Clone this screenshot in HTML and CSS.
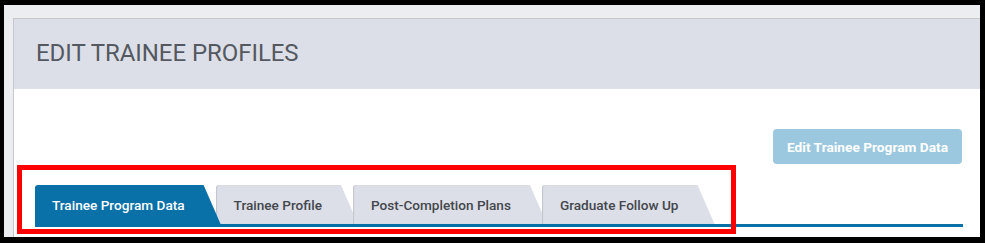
FILE: index.html
```html
<!DOCTYPE html>
<html lang="en">
<head>
<meta charset="UTF-8">
<title>Edit Trainee Profiles</title>
<link rel="stylesheet" href="styles.css">
</head>
<body>
<div class="frame">
    <div class="panel">
        <div class="panel-heading">
            <h2>EDIT TRAINEE PROFILES</h2>
        </div>
        <div class="panel-body">
            <div class="actions">
                <button class="btn-edit" disabled>Edit Trainee Program Data</button>
            </div>
            <ul class="tabs">
                <li class="tab active">Trainee Program Data</li>
                <li class="tab">Trainee Profile</li>
                <li class="tab">Post-Completion Plans</li>
                <li class="tab">Graduate Follow Up</li>
            </ul>
        </div>
    </div>
    <div class="highlight"></div>
</div>
</body>
</html>
```

FILE: styles.css
```css
body {
    margin: 0;
    background-color: #000;
    font-family: Roboto, "Liberation Sans", sans-serif;
}
.frame {
    position: relative;
    margin: 5px 5px 6px 4px;
    height: 232px;
    padding: 13px 0 0 9px;
    box-sizing: border-box;
    background-color: #ebedf1;
    display: flex;
    flex-direction: column;
}
.panel {
    flex: 1;
    display: flex;
    flex-direction: column;
    border-top: 1px solid #c6c8cd;
    border-left: 1px solid #c6c8cd;
    background-color: #fff;
}
.panel-heading {
    height: 70px;
    background-color: #dcdfe7;
    display: flex;
    align-items: center;
    padding-left: 22px;
    padding-bottom: 2px;
    box-sizing: border-box;
}
h2 {
    margin: 0;
    font-size: 24px;
    font-weight: 400;
    color: #545860;
    letter-spacing: -0.05px;
}
.panel-body {
    flex: 1;
    padding: 40px 17px 0 21px;
}
.actions {
    display: flex;
    justify-content: flex-end;
    padding-right: 1px;
}
.btn-edit {
    width: 189px;
    height: 35px;
    border: none;
    border-radius: 4px;
    background-color: #9bc8de;
    color: #fff;
    font-family: Roboto, "Liberation Sans", sans-serif;
    font-size: 13.7px;
    font-weight: 700;
    padding: 0;
}
.tabs {
    list-style: none;
    margin: 21px 0 0 0;
    padding: 0;
    display: flex;
    border-bottom: 3px solid #0a70a8;
}
.tab {
    position: relative;
    height: 39px;
    display: flex;
    align-items: center;
    padding: 0 36px 0 18px;
    margin-right: -5px;
    background-color: #dcdfe7;
    color: #44474d;
    font-size: 13.6px;
    font-weight: 500;
    border-radius: 3px 0 0 0;
    clip-path: polygon(0 0, calc(100% - 17px) 0, 100% 100%, 0 100%);
    box-shadow: inset 1px 0 1px rgba(0, 0, 0, 0.12);
}
.tab.active {
    z-index: 5;
    background-color: #0a70a8;
    color: #fff;
    padding-left: 17px;
    box-shadow: none;
}
.highlight {
    position: absolute;
    left: 13px;
    top: 160px;
    width: 719px;
    height: 69px;
    border: 5px solid #f00;
    box-sizing: border-box;
}
```
